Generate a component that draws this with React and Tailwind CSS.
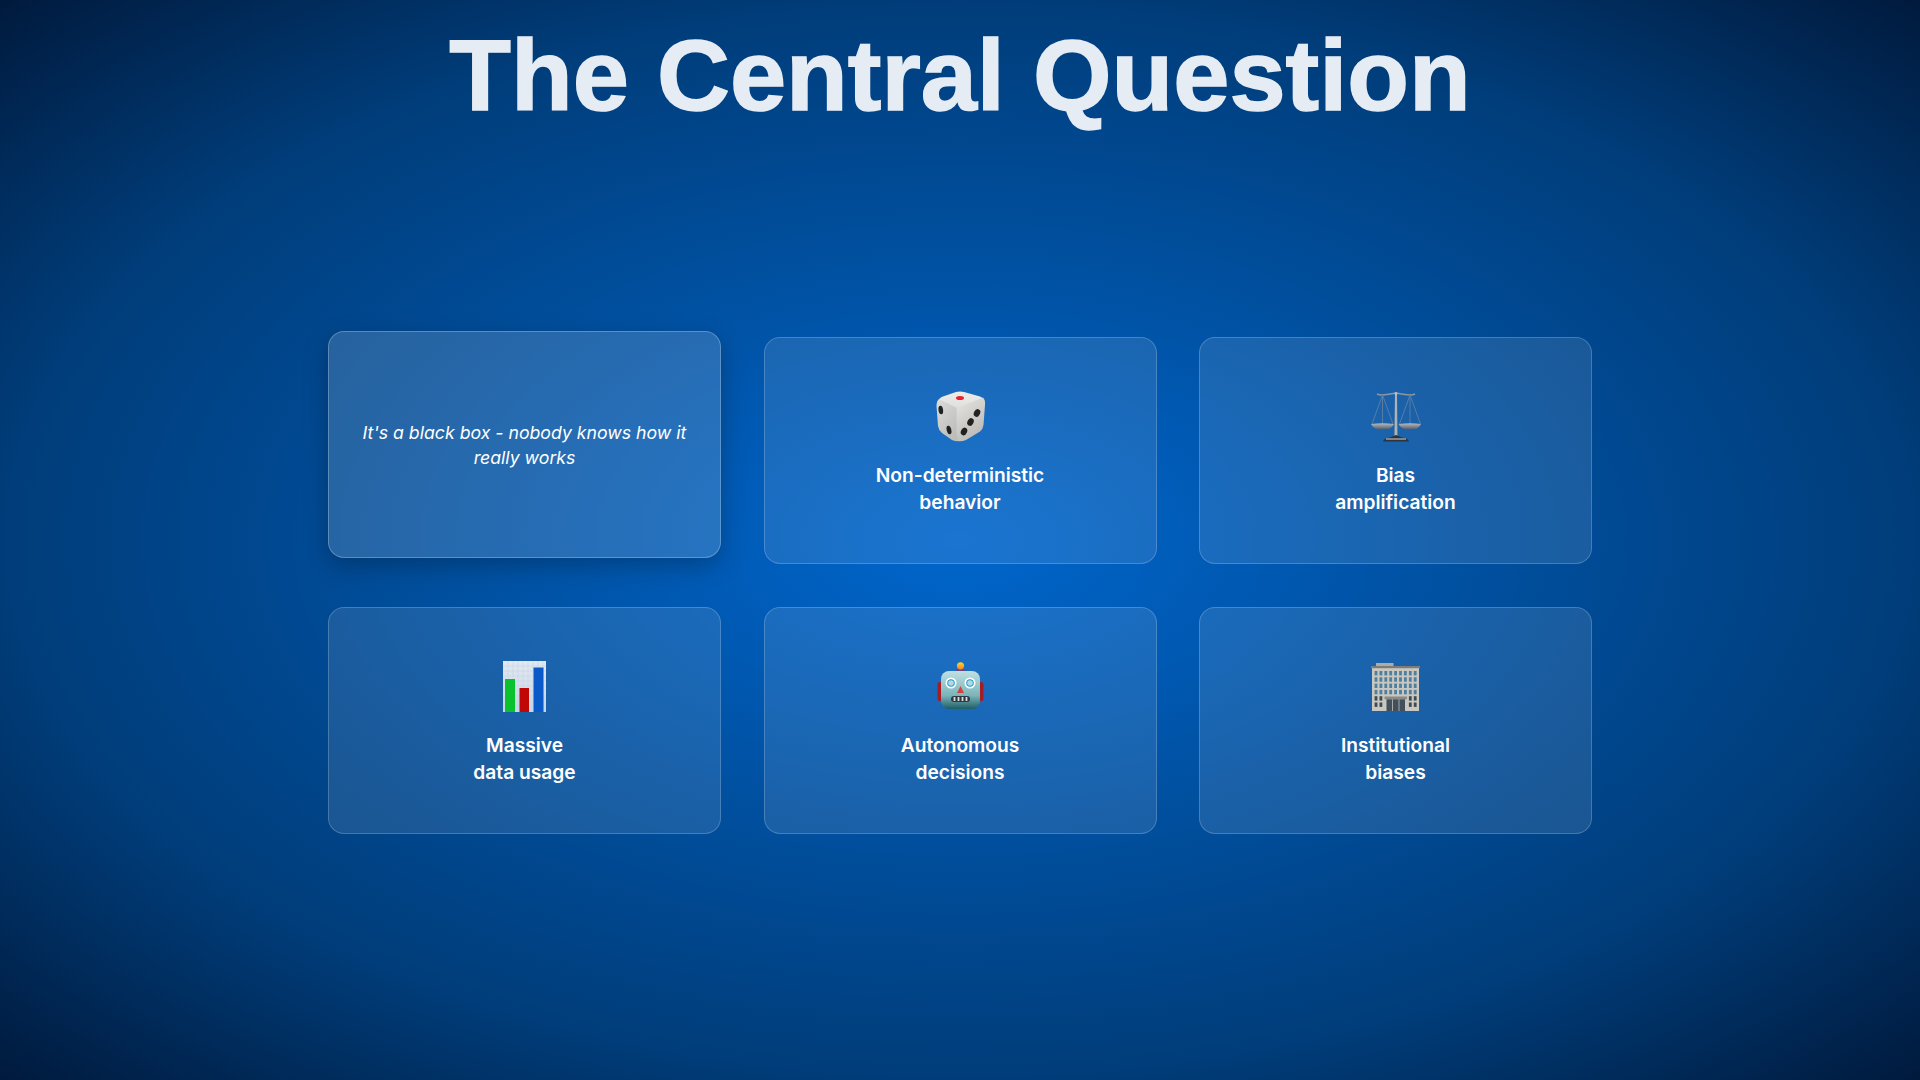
const inter = { fontFamily: "Inter, sans-serif" };

function Dice() {
  return (
    <svg width="50" height="51" viewBox="0 0 50 51" className="ml-[2px]">
      <defs>
        <linearGradient id="diceTop" x1="0" y1="0" x2="0" y2="1">
          <stop offset="0" stopColor="#ececea" />
          <stop offset="1" stopColor="#dededc" />
        </linearGradient>
        <linearGradient id="diceLeft" x1="0" y1="0" x2="0.6" y2="1">
          <stop offset="0" stopColor="#dcdcda" />
          <stop offset="1" stopColor="#bdbdba" />
        </linearGradient>
        <linearGradient id="diceRight" x1="0" y1="0" x2="0.5" y2="1">
          <stop offset="0" stopColor="#e6e6e3" />
          <stop offset="1" stopColor="#bcbbb7" />
        </linearGradient>
      </defs>
      <path d="M3 9 Q3 7 7 5.500 L20 1 Q24 0 28 1 L44 5.500 Q48 7 48.500 11 L21 19 Z" fill="url(#diceTop)" />
      <path d="M3 8 L21 17 Q20 32 22 50 Q19 50.500 16 49 L6 42 Q2.500 39 2 35 L0.500 15 Q0.500 10 3 8 Z" fill="url(#diceLeft)" />
      <path d="M47 6.500 Q49.500 9 49 14 L47.500 34 Q47 38 44 40.500 L30 49 Q25 51 21.500 50 Q19.500 32 20.500 17 Z" fill="url(#diceRight)" />
      <ellipse cx="24" cy="7" rx="4" ry="2" fill="#e8212b" />
      <ellipse cx="4.800" cy="19" rx="2.300" ry="4.300" fill="#222222" transform="rotate(-8 4.800 19)" />
      <ellipse cx="13" cy="39" rx="2.300" ry="4.300" fill="#222222" transform="rotate(-14 13 39)" />
      <ellipse cx="41" cy="22" rx="3" ry="4" fill="#222222" transform="rotate(28 41 22)" />
      <ellipse cx="34.500" cy="31" rx="3" ry="4" fill="#222222" transform="rotate(28 34.500 31)" />
      <ellipse cx="28" cy="40.500" rx="3" ry="4" fill="#222222" transform="rotate(28 28 40.500)" />
    </svg>
  );
}

function Scales() {
  return (
    <svg width="50" height="50" viewBox="0 0 50 50" fill="none" className="ml-[1px]">
      <defs>
        <linearGradient id="pan" x1="0" y1="0" x2="0" y2="1">
          <stop offset="0" stopColor="#b4bbc3" />
          <stop offset="1" stopColor="#525c67" />
        </linearGradient>
        <linearGradient id="pole" x1="0" y1="0" x2="1" y2="0">
          <stop offset="0" stopColor="#7f8a96" />
          <stop offset="0.5" stopColor="#c0c6cc" />
          <stop offset="1" stopColor="#707b87" />
        </linearGradient>
      </defs>
      <path d="M6 2 Q8 3 11 3 Q18 2.500 25 1 Q32 2.500 39 3 Q42 3 44 2" stroke="#8b97a3" strokeWidth="1.400" />
      <path d="M11.500 3 L1 32 M11.500 3 L22 32 M11.500 3 V32" stroke="#5f80a3" strokeWidth="0.900" />
      <path d="M39 3 L28.500 32 M39 3 L49.500 32 M39 3 V32" stroke="#5f80a3" strokeWidth="0.900" />
      <path d="M0 32 Q11.500 30.500 23 32 Q21 37.500 11.500 37.500 Q2 37.500 0 32 Z" fill="url(#pan)" />
      <path d="M27.500 32 Q39 30.500 50 32 Q48 37.500 39 37.500 Q29.500 37.500 27.500 32 Z" fill="url(#pan)" />
      <path d="M24 1 H26 L26.800 44 H23.200 Z" fill="url(#pole)" />
      <circle cx="25" cy="1.500" r="1.500" fill="#b9bec4" />
      <path d="M12 49.500 Q13 46 19 45.500 L25 43 L31 45.500 Q37 46 38 49.500 Z" fill="#2f343a" />
      <path d="M15 47 H35" stroke="#e4e6e8" strokeWidth="0.900" />
    </svg>
  );
}

function Chart() {
  return (
    <svg width="43" height="51" viewBox="0 0 43 51">
      <defs>
        <linearGradient id="sheet" x1="0" y1="0" x2="0" y2="1">
          <stop offset="0" stopColor="#e3e9f0" />
          <stop offset="1" stopColor="#c4d6ea" />
        </linearGradient>
      </defs>
      <rect x="0" y="0" width="43" height="51" fill="url(#sheet)" />
      <g stroke="#c3d2e3" strokeWidth="0.500">
        <path d="M0 5H43M0 10H43M0 15H43M0 20H43M0 25H43M0 30H43M0 35H43M0 40H43M0 45H43" />
        <path d="M5 0V51M10 0V51M15 0V51M20 0V51M25 0V51M30 0V51M35 0V51M40 0V51" />
      </g>
      <rect x="2" y="18" width="10" height="33" fill="#0ac12e" />
      <rect x="16.500" y="27" width="9.500" height="24" fill="#c10606" />
      <rect x="30.500" y="6.500" width="10" height="44.500" fill="#0a59c8" />
    </svg>
  );
}

function Robot() {
  return (
    <svg width="47" height="47" viewBox="0 0 47 47" className="-mt-[2px] ml-[1px]">
      <defs>
        <linearGradient id="head" x1="0" y1="0" x2="0" y2="1">
          <stop offset="0" stopColor="#bfe0e2" />
          <stop offset="0.65" stopColor="#7ab4b9" />
          <stop offset="1" stopColor="#1f5d66" />
        </linearGradient>
        <linearGradient id="ball" x1="0" y1="0" x2="0" y2="1">
          <stop offset="0" stopColor="#ffd23a" />
          <stop offset="1" stopColor="#f08a10" />
        </linearGradient>
      </defs>
      <path d="M18.500 9.500 Q19 6 23.500 6 Q28 6 28.500 9.500 Z" fill="#67469a" />
      <circle cx="23.500" cy="3.800" r="3.600" fill="url(#ball)" />
      <rect x="0.500" y="20" width="6" height="19" rx="2.500" fill="#a51c24" />
      <rect x="40.500" y="20" width="6" height="19" rx="2.500" fill="#a51c24" />
      <rect x="4" y="9" width="39" height="38" rx="8" fill="url(#head)" />
      <circle cx="14" cy="21" r="5.500" fill="#ffffff" />
      <circle cx="14" cy="21" r="3.800" fill="#1d9fd0" />
      <circle cx="14" cy="21" r="2.800" fill="#b5d8de" />
      <circle cx="33" cy="21" r="5.500" fill="#ffffff" />
      <circle cx="33" cy="21" r="3.800" fill="#1d9fd0" />
      <circle cx="33" cy="21" r="2.800" fill="#b5d8de" />
      <path d="M23.500 24 L27 31 H20 Z" fill="#d6403f" />
      <rect x="14" y="34" width="19" height="6" rx="3" fill="#2f3a40" />
      <path d="M17.500 35V39M21.500 35V39M25.500 35V39M29.500 35V39" stroke="#d9dee0" strokeWidth="1.800" />
    </svg>
  );
}

function Building() {
  const rows = [0, 1, 2, 3, 4, 5];
  const cols = [0, 1, 2, 3, 4, 5, 6, 7, 8];
  return (
    <svg width="49" height="48" viewBox="0 0 49 48">
      <rect x="5" y="0" width="17.500" height="3.500" fill="#aeaca6" />
      <rect x="1" y="4" width="47" height="44" fill="#c9c7c0" />
      <rect x="0" y="3" width="49" height="2.200" fill="#7c7c78" />
      {rows.map((r) =>
        cols.map((c) => {
          if (r > 3 && c > 1 && c < 7) return null;
          return (
            <rect
              key={`${r}-${c}`}
              x={3.600 + c * 4.900}
              y={8 + r * 6.300}
              width="2.800"
              height="4.400"
              fill={r < 4 ? "#4d7f9f" : "#3c4a52"}
            />
          );
        })
      )}
      <rect x="13.500" y="33.500" width="22.500" height="2.800" fill="#8a8a86" />
      <rect x="15.500" y="36.300" width="18.500" height="11.700" fill="#41505a" />
      <path d="M21.500 36.300V48M28 36.300V48" stroke="#a6aaa8" strokeWidth="1" />
    </svg>
  );
}

const cards = [
  { icon: <Dice />, lines: ["Non-deterministic", "behavior"] },
  { icon: <Scales />, lines: ["Bias", "amplification"] },
  { icon: <Chart />, lines: ["Massive", "data usage"] },
  { icon: <Robot />, lines: ["Autonomous", "decisions"] },
  { icon: <Building />, lines: ["Institutional", "biases"] },
];

function Card({ icon, lines }) {
  return (
    <div className="h-[227px] pt-[5px] rounded-2xl border border-white/20 bg-white/10 flex flex-col items-center justify-center text-center">
      <div className="h-[52px] flex items-center justify-center mb-[19px]">{icon}</div>
      <div className="text-[19.2px] leading-[27px] font-semibold text-white">
        {lines.map((l) => (
          <div key={l}>{l}</div>
        ))}
      </div>
    </div>
  );
}

export default function App() {
  return (
    <div
      className="h-screen overflow-hidden bg-[radial-gradient(ellipse_at_center,#0066cc_0%,#003d7a_70%,#001a3d_100%)]"
      style={inter}
    >
      <h1
        className="pt-[11px] text-center text-[101px] leading-[128px] font-bold text-[#e6ecf4] [-webkit-text-stroke:1.5px_#e6ecf4]"
        style={{ fontFamily: '"Liberation Sans", Arial, sans-serif' }}
      >
        The Central Question
      </h1>
      <div className="mt-[198px] mx-auto w-[1264px] grid grid-cols-3 gap-x-[42.5px] gap-y-[43px]">
        <div className="h-[227px] -translate-y-[6px] rounded-2xl border border-white/25 bg-white/15 shadow-[0_8px_24px_rgba(0,0,0,0.25)] flex items-center justify-center text-center px-8">
          <p className="text-[17.7px] leading-[25px] italic text-white">
            It's a black box - nobody knows how it really works
          </p>
        </div>
        {cards.map((c) => (
          <Card key={c.lines[0]} icon={c.icon} lines={c.lines} />
        ))}
      </div>
    </div>
  );
}
